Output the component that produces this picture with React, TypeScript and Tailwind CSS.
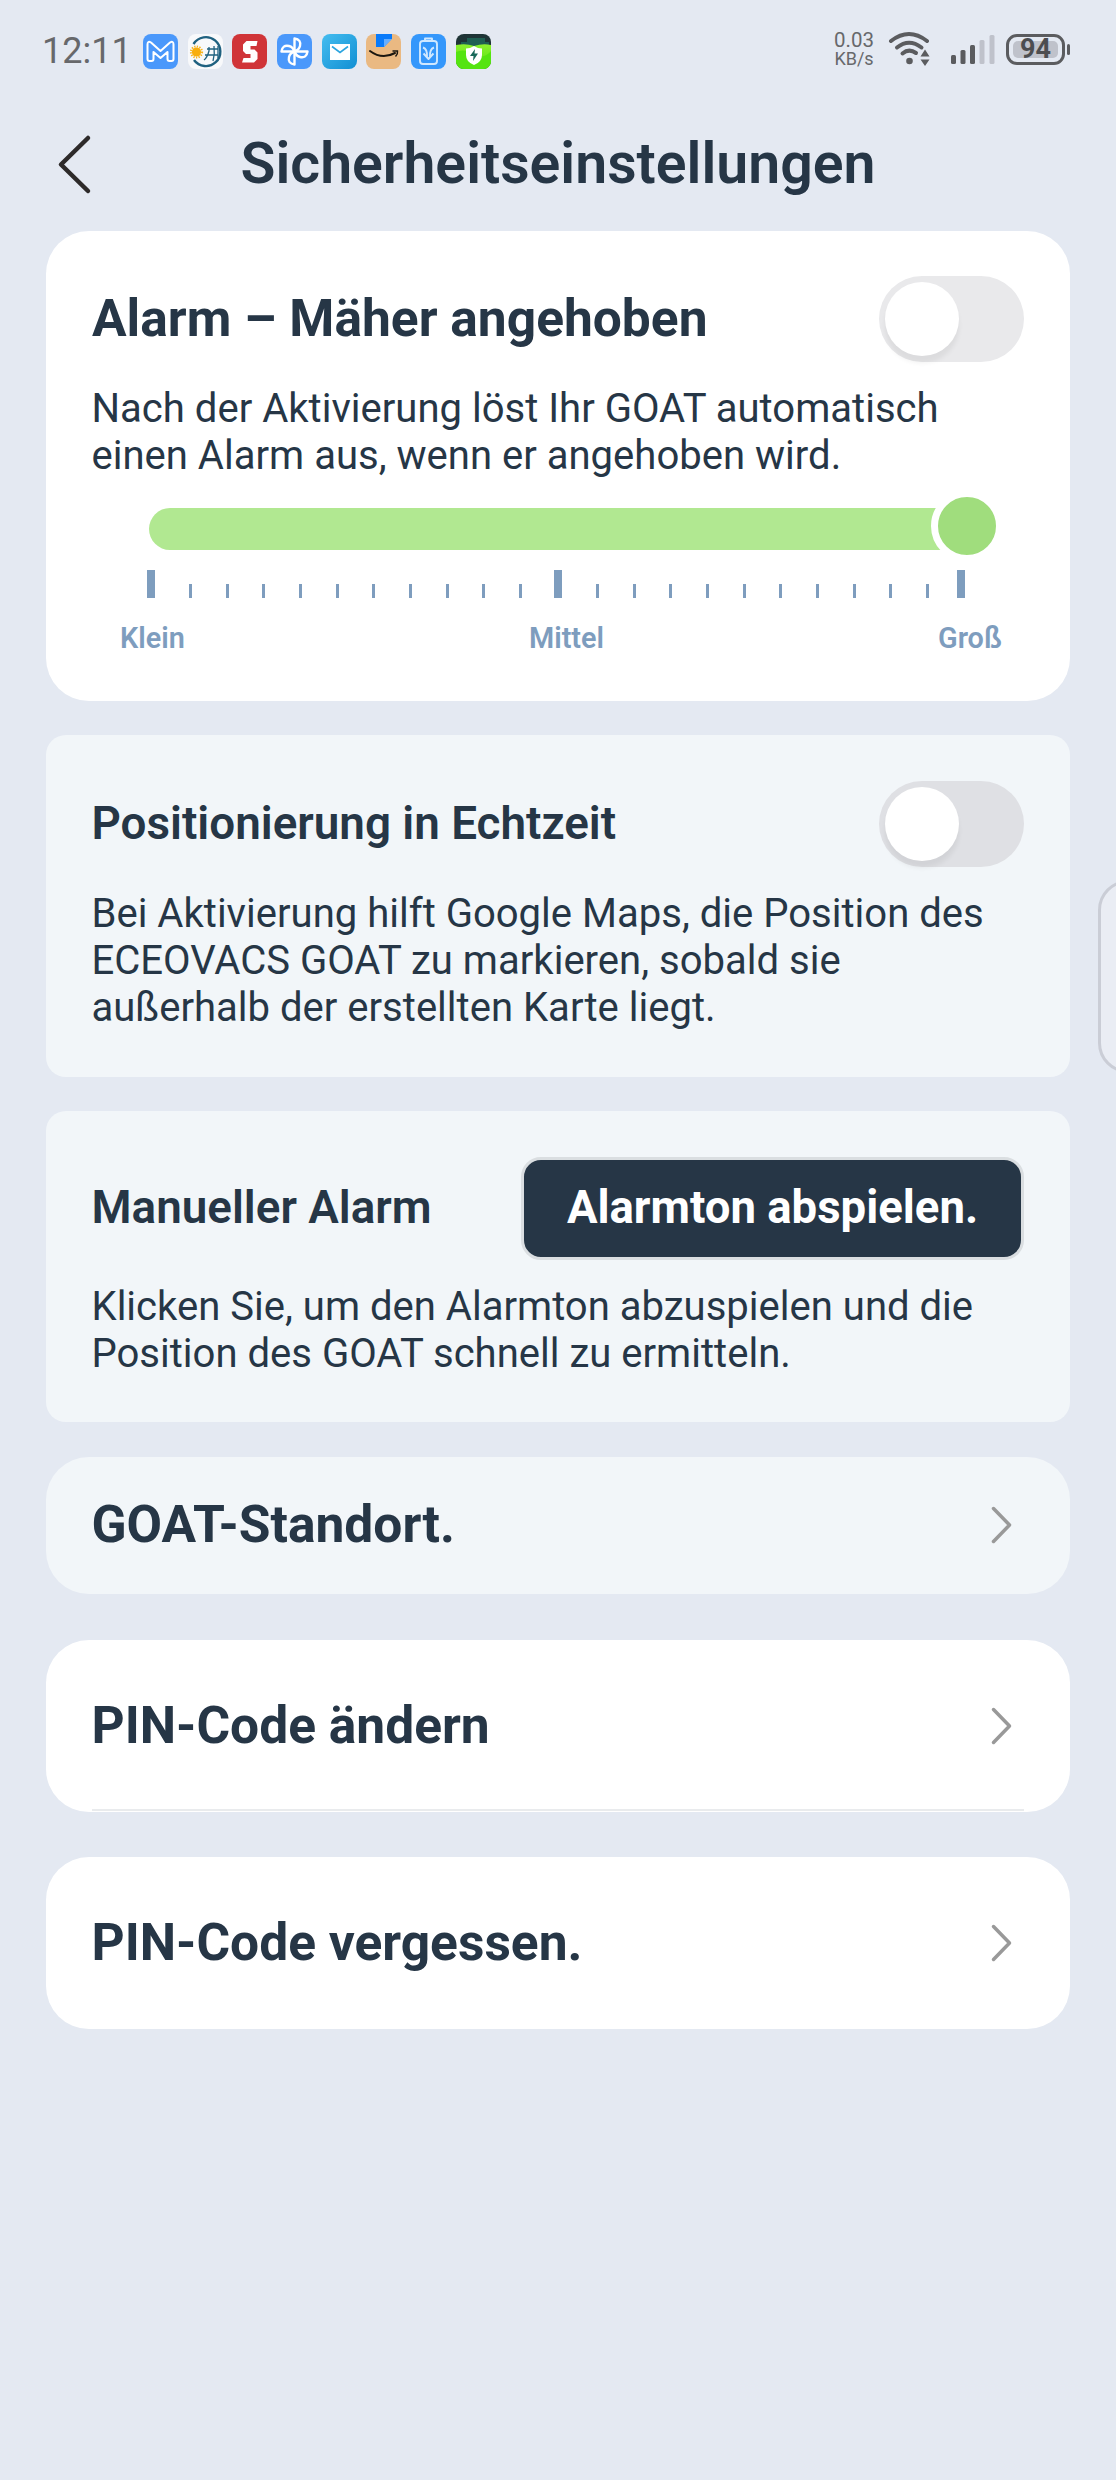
import type { ReactNode } from 'react'

function AppIcons() {
  return (
    <div className="flex gap-[9.7px]">
      <svg className="size-[35px]" viewBox="0 0 35 35">
        <rect width="35" height="35" rx="8" fill="#4a98fb" />
        <path d="M4.500 25V10.500Q4.500 6.500 8 8.500L17.500 17L27 8.500Q30.500 6.500 30.500 10.500V25Q30.500 27 28.500 27H26.500Q24.500 27 24.500 25V18L17.500 24L10.500 18V25Q10.500 27 8.500 27H6.500Q4.500 27 4.500 25Z" fill="none" stroke="#fff" strokeWidth="2" strokeLinejoin="round" />
      </svg>
      <svg className="size-[35px]" viewBox="0 0 35 35">
        <rect width="35" height="35" rx="8" fill="#f8f9fb" />
        <path d="M5.500 10A14.500 14.500 0 1 1 6 26" fill="none" stroke="#1f6180" strokeWidth="2.400" />
        <g fill="none" stroke="#1f6180" strokeWidth="1.300">
          <path d="M19 15H30M17 21H30M16 26Q19 24 21 17V13M25 27Q27 20 26 12M30 12V24" />
        </g>
        <circle cx="8.500" cy="18" r="5.600" fill="none" stroke="#f5b420" strokeWidth="2" strokeDasharray="1.300 1.300" />
        <circle cx="8.500" cy="18" r="4.600" fill="#f9ae0c" />
      </svg>
      <svg className="size-[35px]" viewBox="0 0 35 35">
        <rect width="35" height="35" rx="8" fill="#d03438" />
        <path d="M25.500 7H14.500L11 10.500V17L14 20H18.500V24H11.500L10 28.500H22L25.500 25V18.500L22.500 15.500H18.500V12H24.500Z" fill="#fff" />
      </svg>
      <svg className="size-[35px]" viewBox="0 0 35 35">
        <rect width="35" height="35" rx="8" fill="#4a98fb" />
        <g fill="none" stroke="#fff" strokeWidth="2.400" strokeLinejoin="round">
          <path id="blade" d="M17.500 17.500V4.500Q24.500 5.500 23 12Q22 16 17.500 17.500Z" />
          <use href="#blade" transform="rotate(90 17.500 17.500)" />
          <use href="#blade" transform="rotate(180 17.500 17.500)" />
          <use href="#blade" transform="rotate(270 17.500 17.500)" />
        </g>
      </svg>
      <svg className="size-[35px]" viewBox="0 0 35 35">
        <defs>
          <linearGradient id="mail" x1="0" y1="0" x2="1" y2="1">
            <stop offset="0" stopColor="#45bdf0" />
            <stop offset="1" stopColor="#118fd3" />
          </linearGradient>
        </defs>
        <rect width="35" height="35" rx="8" fill="url(#mail)" />
        <path d="M8 10H28V26H8Z" fill="#fff" />
        <path d="M10 12.500L18 18.500L26 12.500" fill="none" stroke="#2ba4df" strokeWidth="1.600" />
      </svg>
      <svg className="size-[35px]" viewBox="0 0 35 35">
        <rect width="35" height="35" rx="8" fill="#eab982" />
        <path d="M10 0H26V4.500L18 13H10Z" fill="#0a7bfa" />
        <path d="M18 5H26L18 13Z" fill="#66aeff" />
        <path d="M4 17Q16 26 29 19" fill="none" stroke="#1b1710" strokeWidth="2" strokeLinecap="round" />
        <path d="M26.500 17H31.500Q32 20 29.500 22.500" fill="none" stroke="#1b1710" strokeWidth="1.500" />
      </svg>
      <svg className="size-[35px]" viewBox="0 0 35 35">
        <rect width="35" height="35" rx="8" fill="#3497fb" />
        <g fill="none" stroke="#cfe8ff" strokeWidth="1.900" strokeLinejoin="round">
          <path d="M14 7V4.500H21V7M12 7H23Q26 7 26 10V27Q26 30 23 30H12Q9 30 9 27V10Q9 7 12 7Z" />
          <path d="M12 13.500Q16.500 15 16 23L12.500 19.500M23 13.500Q18.500 15 19 23L22.500 19.500M13 20L17.500 25L22 20" />
        </g>
      </svg>
      <svg className="size-[35px]" viewBox="0 0 35 35">
        <defs>
          <clipPath id="tile">
            <rect width="35" height="35" rx="8" />
          </clipPath>
          <linearGradient id="grass" x1="0" y1="0" x2="0" y2="1">
            <stop offset="0" stopColor="#8cf12e" />
            <stop offset="1" stopColor="#4fe00c" />
          </linearGradient>
        </defs>
        <g clipPath="url(#tile)">
          <rect width="35" height="35" fill="#1e3436" />
          <path d="M5 8H11V4H29V8H33V12H5Z" fill="#1f5f52" />
          <path d="M0 11Q10 9 18 12Q27 9 35 11V35H0Z" fill="url(#grass)" />
          <path d="M0 18Q8 14 18 20T35 17V35H0Z" fill="#55e411" />
          <path d="M18 12Q22 14.500 26 14.500V21Q26 28 18 31Q10 28 10 21V14.500Q14 14.500 18 12Z" fill="#fff" />
          <path d="M19 15L14 22H17.500L17 27L22 19.500H18.500Z" fill="#19695a" />
        </g>
      </svg>
    </div>
  )
}

function StatusBar() {
  return (
    <div className="flex h-[104px] shrink-0 items-start pl-[42px] pr-[46px] pt-[34px] text-[#67686b]">
      <div className="w-[101px] text-[36px] leading-[35px]">12:11</div>
      <AppIcons />
      <div className="ml-auto mt-[-3px] w-[42px] text-center">
        <p className="text-[20.5px] leading-[19px]">0.03</p>
        <p className="text-[18px] leading-[17px]">KB/s</p>
      </div>
      <svg className="ml-[13px] mt-[-3px] h-[36px] w-[44px]" viewBox="0 0 44 36">
        <g fill="none" stroke="#5b5c5f" strokeWidth="4" strokeLinecap="round">
          <path d="M3 10Q21 -4 39 10" />
          <path d="M9 16.500Q21 7 33.500 16.500" />
          <path d="M14.500 22.500Q21 17 28 22" />
        </g>
        <circle cx="21.500" cy="30" r="3.300" fill="#5b5c5f" />
        <path d="M37 18.500L41.500 25.500H32.500ZM37 35L32.500 28.500H41.500Z" fill="#5b5c5f" />
      </svg>
      <svg className="ml-[18px] h-[31px] w-[46px]" viewBox="0 0 46 31">
        <g fill="#5b5c5f">
          <rect x="1" y="21" width="5" height="9" rx="1.500" />
          <rect x="10.500" y="16" width="5" height="14" rx="1.500" />
          <rect x="20" y="11" width="5" height="19" rx="1.500" />
        </g>
        <g fill="#bfc2cb">
          <rect x="29.500" y="6" width="5" height="24" rx="1.500" />
          <rect x="39.500" y="1" width="5" height="29" rx="1.500" />
        </g>
      </svg>
      <div className="ml-[10px] flex items-center gap-[2px]">
        <div className="h-[31px] w-[59px] rounded-[11px] border-[3px] border-[#5b5c5f] p-[4px]">
          <div className="flex h-full items-center justify-center rounded-[5px] bg-[#bfc2cb] text-[27px] font-bold leading-none text-[#4c4d50]">94</div>
        </div>
        <div className="h-[11px] w-[3px] rounded-full bg-[#5b5c5f]" />
      </div>
    </div>
  )
}

function Toggle({ className }: { className: string }) {
  return (
    <div className={`h-[86px] w-[145px] shrink-0 rounded-full p-[6px] ${className}`}>
      <div className="size-[74px] rounded-full bg-white shadow-[0_7px_5px_rgba(0,0,0,0.06)]" />
    </div>
  )
}

function Ticks() {
  return (
    <div className="flex w-[333px] items-end justify-between">
      {Array.from({ length: 10 }, (_, i) => (
        <div key={i} className="h-[14px] w-[3px] bg-[#7e9dbe]" />
      ))}
    </div>
  )
}

function BigTick() {
  return <div className="h-[28px] w-[8px] bg-[#7e9dbe]" />
}

function VolumeSlider() {
  return (
    <div>
      <div className="relative ml-[57px] mt-[17px] h-[42px] w-[818px] rounded-l-full bg-[#b1e891]">
        <div className="absolute left-[782px] top-[-18px] size-[72px] rounded-full border-[7px] border-white bg-[#a0dd7d]" />
      </div>
      <div className="ml-[55px] mt-[20px] flex items-end">
        <BigTick />
        <div className="w-[34px]" />
        <Ticks />
        <div className="w-[32px]" />
        <BigTick />
        <div className="w-[34px]" />
        <Ticks />
        <div className="w-[28px]" />
        <BigTick />
      </div>
      <div className="ml-[28px] mt-[23px] flex text-[28.8px] font-semibold leading-[34px] text-[#7e9dbe]">
        <span className="w-[409px]">Klein</span>
        <span className="w-[409px]">Mittel</span>
        <span>Groß</span>
      </div>
    </div>
  )
}

function Description({ children }: { children: ReactNode }) {
  return <p className="ml-[-0.5px] whitespace-nowrap text-[40.05px] leading-[47px]">{children}</p>
}

function LinkCard({ title, className }: { title: string; className: string }) {
  return (
    <div className={`flex items-center justify-between rounded-[43px] pl-[45.5px] pr-[57px] ${className}`}>
      <h2 className="mt-[-1px] text-[51.5px] font-bold leading-[60px]">{title}</h2>
      <svg className="mt-[-1px] h-[38px] w-[22px]" viewBox="0 0 22 38">
        <path d="M2.500 2.500L18.500 19L2.500 35.500" fill="none" stroke="#999" strokeWidth="3.500" strokeLinecap="round" strokeLinejoin="round" />
      </svg>
    </div>
  )
}

export default function App() {
  return (
    <div className="relative flex h-[2480px] w-[1116px] flex-col overflow-hidden bg-[#e4e9f2] font-['Roboto',sans-serif] text-[#263646]">
      <StatusBar />
      <header className="flex h-[127px] shrink-0 items-start pl-[57px] pt-[29px]">
        <svg className="h-[62px] w-[36px]" viewBox="0 0 36 62">
          <path d="M31 5L4 31.500L31 58" fill="none" stroke="#2d2a2a" strokeWidth="4.500" strokeLinecap="round" strokeLinejoin="round" />
        </svg>
        <h1 className="w-[930px] text-center text-[57.2px] font-semibold leading-[62px]">Sicherheitseinstellungen</h1>
      </header>

      <main className="flex w-[1024px] flex-col self-center">
        <section className="h-[470px] rounded-[43px] bg-white px-[46px] pt-[45px]">
          <div className="flex items-center justify-between">
            <h2 className="text-[51.5px] font-bold">Alarm – Mäher angehoben</h2>
            <Toggle className="bg-[#e9e9eb]" />
          </div>
          <div className="h-[23px]" />
          <Description>
            Nach der Aktivierung löst Ihr GOAT automatisch
            <br />
            einen Alarm aus, wenn er angehoben wird.
          </Description>
          <div className="h-[12px]" />
          <VolumeSlider />
        </section>

        <section className="mt-[34px] h-[342px] rounded-[20px] bg-[#f2f6f9] px-[46px] pt-[46px]">
          <div className="flex items-center justify-between">
            <h2 className="ml-[-0.5px] text-[45.8px] font-semibold">Positionierung in Echtzeit</h2>
            <Toggle className="bg-[#dfe0e4]" />
          </div>
          <div className="h-[23px]" />
          <Description>
            Bei Aktivierung hilft Google Maps, die Position des
            <br />
            ECEOVACS GOAT zu markieren, sobald sie
            <br />
            außerhalb der erstellten Karte liegt.
          </Description>
        </section>

        <section className="mt-[34px] h-[311px] rounded-[20px] bg-[#f2f6f9] px-[46px] pt-[46px]">
          <div className="flex items-center justify-between">
            <h2 className="ml-[-0.5px] text-[45.8px] font-semibold">Manueller Alarm</h2>
            <button className="h-[103px] w-[503px] rounded-[20px] border-[3px] border-[#dadee1] bg-[#263646] text-[45.5px] font-bold text-white">
              Alarmton abspielen.
            </button>
          </div>
          <div className="h-[23px]" />
          <Description>
            Klicken Sie, um den Alarmton abzuspielen und die
            <br />
            Position des GOAT schnell zu ermitteln.
          </Description>
        </section>

        <LinkCard title="GOAT-Standort." className="mt-[35px] h-[137px] bg-[#f2f6f9]" />
        <div className="relative mt-[46px]">
          <LinkCard title="PIN-Code ändern" className="h-[172px] bg-white" />
          <div className="absolute bottom-[1px] left-[46px] right-[46px] h-[2px] bg-[#e9ebed]" />
        </div>
        <LinkCard title="PIN-Code vergessen." className="mt-[45px] h-[172px] bg-white" />
      </main>

      {/* edge panel handle */}
      <div className="absolute left-[1098px] top-[880px] h-[193px] w-[60px] rounded-[30px] border-[3px] border-[#cacdd6] bg-[#eaedf4]" />
    </div>
  )
}
